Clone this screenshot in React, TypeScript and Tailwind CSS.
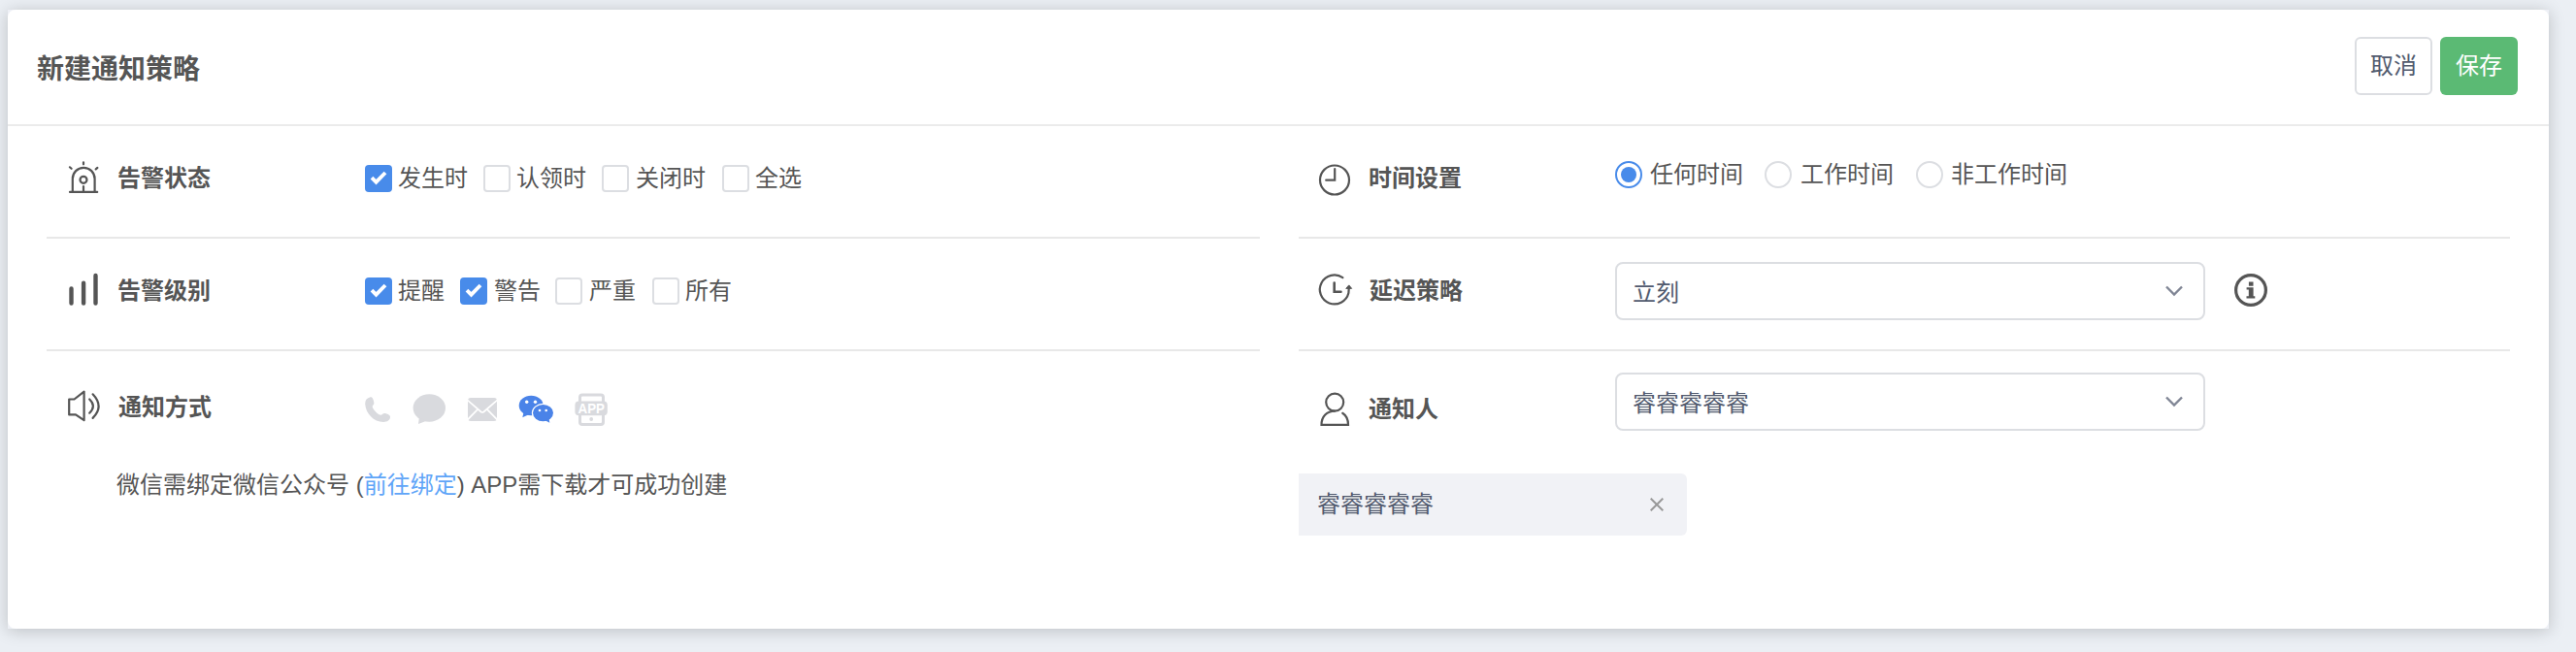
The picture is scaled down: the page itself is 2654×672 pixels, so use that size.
import React, { useState } from "react";

const STATUS_OPTIONS = [
  { label: "发生时", width: "w-[122px]", gap: "gap-1.5" },
  { label: "认领时", width: "w-[122px]", gap: "gap-1.5" },
  { label: "关闭时", width: "w-[124px]", gap: "gap-[7px]" },
  { label: "全选", width: "w-[100px]", gap: "gap-1.5" },
];

const LEVEL_OPTIONS = [
  { label: "提醒", width: "w-[98px]", gap: "gap-1.5" },
  { label: "警告", width: "w-[98px]", gap: "gap-[7px]" },
  { label: "严重", width: "w-[100px]", gap: "gap-[7px]" },
  { label: "所有", width: "w-[100px]", gap: "gap-1.5" },
];

const TIME_OPTIONS = [
  { label: "任何时间", width: "w-[154px]", gap: "gap-2" },
  { label: "工作时间", width: "w-[156px]", gap: "gap-[9px]" },
  { label: "非工作时间", width: "w-[180px]", gap: "gap-2" },
];

interface IconProps {
  children: React.ReactNode;
}

const LineIcon: React.FC<IconProps> = ({ children }) => (
  <svg
    className="h-9 w-[34px] shrink-0 overflow-visible text-[#555]"
    viewBox="0 0 34 36"
    fill="none"
    stroke="currentColor"
    strokeWidth="2.2"
    strokeLinecap="round"
  >
    {children}
  </svg>
);

const AlarmIcon = () => (
  <LineIcon>
    <path d="M4.8 31.5V18.2a11.4 11.4 0 0 1 22.8 0V31.5" />
    <path d="M2 31.9h28.2M16 26v5" />
    <circle cx="16" cy="19.3" r="3.5" />
    <path d="M16 1.3v2M1.9 6.3l1.7 1.5M30.4 6.9l-1.7 1.5" />
  </LineIcon>
);

const LevelIcon = () => (
  <LineIcon>
    <path strokeWidth="4.4" d="M3.5 15.5v15M16.1 9.7v20.8M28.5 2v28.5" />
  </LineIcon>
);

const SpeakerIcon = () => (
  <LineIcon>
    <path strokeLinejoin="round" d="M1.2 9.5h5.3L16.6 1.6v29.6L8 25.4H1.2z" />
    <path d="M22.2 9.5q7.4 7 0 14.2M25.6 4.3q12 12.6 0 24.6" />
  </LineIcon>
);

const ClockIcon = () => (
  <LineIcon>
    <circle cx="17" cy="19.5" r="15" />
    <path d="M17.2 8.2v11.5H8.2" />
  </LineIcon>
);

const DelayIcon = () => (
  <LineIcon>
    <path d="M25.4 4.1A15 15 0 1 0 31.4 20L31.8 14" />
    <path d="M16.7 9.5v9.2h6.8" strokeWidth="2.6" />
    <path d="M29 15.1l2.8-3.2 2.6 3.2z" fill="currentColor" strokeWidth="1" />
  </LineIcon>
);

const UserIcon = () => (
  <LineIcon>
    <circle cx="17.2" cy="10.6" r="9" />
    <path d="M17 19.6C9 19.8 3.5 25 3.5 33.8H31C31 28.8 29 24.2 25.2 21.8" />
  </LineIcon>
);

const InfoIcon = () => (
  <svg className="h-[34px] w-[34px] text-[#555]" viewBox="0 0 34 34" fill="currentColor">
    <circle cx="17" cy="17" r="15.4" fill="none" stroke="currentColor" strokeWidth="3.2" />
    <path d="M14.9 8.6h4.6v4.2h-4.6zM12.6 14.3h7v8.9h1.7v2.3h-8.8v-2.3h2.3v-6.7h-2.2z" />
  </svg>
);

const PhoneIcon = () => (
  <svg className="h-[26px] w-[26px]" viewBox="0 0 26 26" fill="currentColor">
    <path d="M5 .4C1.8 1.2.1 3.5.2 7.4.8 17 9 25.9 19 25.9c4 0 7-1.9 7-4.9 0-1.4-.5-2-1.5-2.6-2.4-1.4-4.9-1.9-6-.9-1.1 1.2-2.5 1.6-4 .7C11.5 16.3 9 13.6 7.9 11c-.6-1.4.2-2.2 1.1-3C10 7 9 4 7.9 1.6 7.3.3 6.2.1 5 .4z" />
  </svg>
);

const MessageIcon = () => (
  <svg className="ml-[23px] h-8 w-[35px]" viewBox="0 0 35 32" fill="currentColor">
    <ellipse cx="17.3" cy="14.5" rx="16.7" ry="14.2" />
    <path d="M6.8 24.5L6 31l8.5-3.2z" />
  </svg>
);

const MailIcon = () => (
  <svg className="ml-[22px] h-6 w-[30px]" viewBox="0 0 30 24">
    <rect width="30" height="24" rx="3" fill="currentColor" />
    <path
      d="M-.5 2.3L13.6 14.5q1.4 1 2.8 0L30.5 2.3M-.5 22.8L10.2 11.8M30.5 22.8L19.8 11.8"
      fill="none"
      stroke="#fff"
      strokeWidth="1.7"
    />
  </svg>
);

const WechatIcon = () => (
  <svg className="ml-[22px] h-8 w-[37px] text-[#4a83e8]" viewBox="0 0 37 32" fill="currentColor">
    <ellipse cx="13.2" cy="12" rx="12.5" ry="10.3" />
    <path d="M5.5 19L4.3 24.3l6.5-3z" />
    <ellipse cx="25.5" cy="19.6" rx="11.7" ry="9.8" fill="#fff" />
    <ellipse cx="25.5" cy="19.6" rx="10.5" ry="8.6" />
    <path d="M27.5 27.3L32.3 29.8l-.8-5z" />
    <g fill="#fff">
      <circle cx="8.7" cy="8.3" r="1.7" />
      <circle cx="17.5" cy="8.3" r="1.7" />
      <circle cx="22" cy="17" r="1.3" />
      <circle cx="28.7" cy="17" r="1.3" />
    </g>
  </svg>
);

const AppIcon = () => (
  <svg className="ml-[21px] h-[34px] w-[35px]" viewBox="0 0 35 34">
    <rect x="5.5" y="2" width="24" height="30.5" rx="2.5" fill="none" stroke="currentColor" strokeWidth="3" />
    <rect x=".4" y="8.4" width="33.4" height="14.8" rx="4" fill="currentColor" />
    <circle cx="17.2" cy="27" r="1.9" fill="currentColor" />
    <text
      x="3.6"
      y="21"
      fontSize="14.5"
      fontWeight="700"
      fill="#fff"
      textLength="27.4"
      lengthAdjust="spacingAndGlyphs"
    >
      APP
    </text>
  </svg>
);

interface CheckItemProps {
  label: string;
  width: string;
  gap: string;
  checked: boolean;
  onToggle: () => void;
}

const CheckItem: React.FC<CheckItemProps> = ({ label, width, gap, checked, onToggle }) => (
  <button
    type="button"
    role="checkbox"
    aria-checked={checked}
    onClick={onToggle}
    className={`flex shrink-0 items-center whitespace-nowrap ${width} ${gap}`}
  >
    <span
      className={`flex h-7 w-7 shrink-0 rounded-[4px] ${
        checked ? "bg-[#488bea]" : "border-2 border-[#dcdee2] bg-white"
      }`}
    >
      {checked && (
        <svg className="h-7 w-7" viewBox="0 0 28 28" fill="none" stroke="#fff" strokeWidth="3.8">
          <path d="M7 13.2l4.5 4.5L21 8" />
        </svg>
      )}
    </span>
    {label}
  </button>
);

interface CheckListProps {
  options: { label: string; width: string; gap: string }[];
  initial: string[];
}

const CheckList: React.FC<CheckListProps> = ({ options, initial }) => {
  const [selected, setSelected] = useState<string[]>(initial);

  const toggle = (label: string) => {
    setSelected((prev) =>
      prev.includes(label) ? prev.filter((item) => item !== label) : [...prev, label]
    );
  };

  return (
    <div className="flex items-center">
      {options.map((option) => (
        <CheckItem
          key={option.label}
          label={option.label}
          width={option.width}
          gap={option.gap}
          checked={selected.includes(option.label)}
          onToggle={() => toggle(option.label)}
        />
      ))}
    </div>
  );
};

const SelectBox: React.FC<{ value: string }> = ({ value }) => (
  <button
    type="button"
    className="flex h-[60px] w-[608px] items-center justify-between rounded-lg border-2 border-[#dcdee2] bg-white pr-[21px] pl-4 text-[#515a6e]"
  >
    <span className="pt-[3px]">{value}</span>
    <svg className="h-3 w-[18px]" viewBox="0 0 18 12" fill="none" stroke="#808695" strokeWidth="2.4">
      <path d="M1 1.5l8 8 8-8" />
    </svg>
  </button>
);

const App: React.FC = () => {
  const [time, setTime] = useState(TIME_OPTIONS[0].label);
  const [receivers, setReceivers] = useState<string[]>(["睿睿睿睿睿"]);

  return (
    <div className="h-[672px] w-[2654px] overflow-hidden bg-[#ebeff4] pt-2.5 pl-2 font-['Liberation_Sans','Noto_Sans_CJK_SC',sans-serif] text-2xl leading-9 text-[#555]">
      <div className="h-[638px] w-[2618px] bg-[#eef0f6] shadow-[0_2px_16px_rgba(0,0,0,0.2)]">
        <div className="h-full rounded-lg bg-white">
          <div className="flex h-[120px] items-start justify-between border-b-2 border-[#ebebeb] pt-7 pr-8 pl-[30px]">
            <h1 className="pt-4 text-[28px] leading-9 font-semibold">新建通知策略</h1>
            <div className="flex gap-2">
              <button className="h-[60px] w-20 rounded-md border-2 border-[#dcdee2] text-[#515a6e]">
                取消
              </button>
              <button className="h-[60px] w-20 rounded-md bg-[#5bba74] text-white">保存</button>
            </div>
          </div>

          <div className="grid grid-cols-[1250px_1248px] gap-x-10 px-10">
            <div>
              <div className="flex h-[116px] items-center border-b-2 border-[#e8e8e8] pb-1.5">
                <div className="flex w-[328px] items-center gap-[17px] pl-[22px] font-semibold">
                  <AlarmIcon />
                  告警状态
                </div>
                <CheckList options={STATUS_OPTIONS} initial={["发生时"]} />
              </div>
              <div className="flex h-[116px] items-center border-b-2 border-[#e8e8e8] pb-1.5">
                <div className="flex w-[328px] items-center gap-[17px] pl-[22px] font-semibold">
                  <LevelIcon />
                  告警级别
                </div>
                <CheckList options={LEVEL_OPTIONS} initial={["提醒", "警告"]} />
              </div>
              <div className="flex h-[116px] items-center">
                <div className="flex w-[328px] items-center gap-[18px] pl-[22px] font-semibold">
                  <SpeakerIcon />
                  通知方式
                </div>
                <div className="flex items-center pt-1 text-[#d9dade]">
                  <PhoneIcon />
                  <MessageIcon />
                  <MailIcon />
                  <WechatIcon />
                  <AppIcon />
                </div>
              </div>
              <p className="pl-[72px] leading-[44px]">
                微信需绑定微信公众号 (<a className="cursor-pointer text-[#5fa5f8]">前往绑定</a>) APP需下载才可成功创建
              </p>
            </div>

            <div>
              <div className="flex h-[116px] items-center border-b-2 border-[#e8e8e8] pb-1.5">
                <div className="flex w-[326px] items-center gap-[18px] pl-5 font-semibold">
                  <ClockIcon />
                  时间设置
                </div>
                <div className="flex items-center pb-2">
                  {TIME_OPTIONS.map((option) => (
                    <button
                      key={option.label}
                      type="button"
                      onClick={() => setTime(option.label)}
                      className={`flex shrink-0 items-center whitespace-nowrap ${option.gap} ${option.width}`}
                    >
                      <span
                        className={`flex h-7 w-7 shrink-0 items-center justify-center rounded-full border-2 ${
                          time === option.label ? "border-[#488bea]" : "border-[#dcdee2]"
                        }`}
                      >
                        {time === option.label && (
                          <span className="h-4 w-4 rounded-full bg-[#488bea]" />
                        )}
                      </span>
                      {option.label}
                    </button>
                  ))}
                </div>
              </div>
              <div className="flex h-[116px] items-center border-b-2 border-[#e8e8e8] pb-1.5">
                <div className="flex w-[326px] items-center gap-[19px] pl-5 font-semibold">
                  <DelayIcon />
                  延迟策略
                </div>
                <SelectBox value="立刻" />
                <div className="pb-[3px] pl-[30px]">
                  <InfoIcon />
                </div>
              </div>
              <div className="flex h-[116px] items-center">
                <div className="flex w-[326px] items-center gap-[18px] pt-[3px] pl-5 font-semibold">
                  <UserIcon />
                  通知人
                </div>
                <div className="pb-3">
                  <SelectBox value="睿睿睿睿睿" />
                </div>
              </div>
              {receivers.map((name) => (
                <div
                  key={name}
                  className="mt-2.5 flex h-16 w-[400px] items-center justify-between rounded-r-md bg-[#f1f2f6] pr-6 pl-[19px] text-[#515a6e]"
                >
                  {name}
                  <button
                    type="button"
                    onClick={() => setReceivers(receivers.filter((item) => item !== name))}
                  >
                    <svg className="h-3.5 w-3.5" viewBox="0 0 14 14" stroke="#999" strokeWidth="2">
                      <path d="M.7.7l12.6 12.6M13.3.7L.7 13.3" />
                    </svg>
                  </button>
                </div>
              ))}
            </div>
          </div>
        </div>
      </div>
    </div>
  );
};

export default App;
